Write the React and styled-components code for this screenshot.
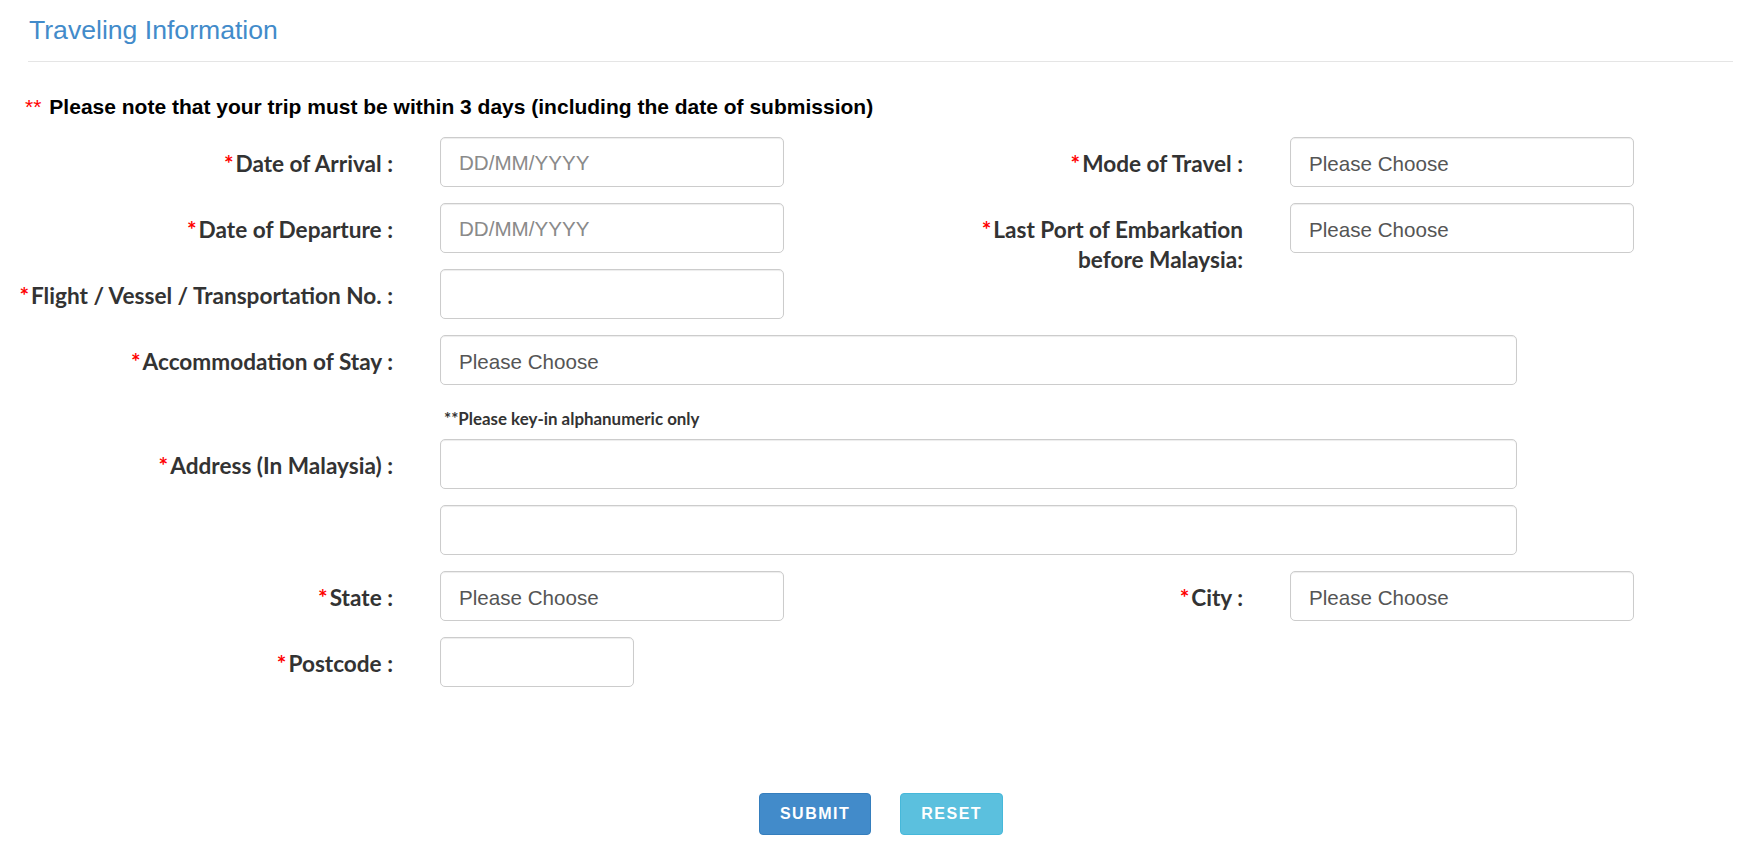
import React from "react";
import styled, { createGlobalStyle } from "styled-components";

const GlobalStyle = createGlobalStyle`
  * {
    box-sizing: border-box;
  }
  body {
    margin: 0;
    background: #ffffff;
    font-family: "Liberation Sans", Arial, sans-serif;
  }
`;

const Page = styled.div`
  padding-top: 16px;
  min-height: 850px;
`;

const Heading = styled.h3`
  margin: 0 5px 0 28px;
  padding: 0 0 16px 1px;
  font-size: 26.6px;
  font-weight: 400;
  line-height: 1.1;
  color: #428bca;
  border-bottom: 1px solid #e5e5e5;
`;

const Note = styled.p`
  margin: 33px 0 0 25px;
  font-size: 21px;
  line-height: 24px;
  font-weight: 700;
  color: #000000;
`;

const NoteStars = styled.span`
  color: #ff0000;
  font-weight: 400;
  margin-right: 8px;
`;

const Form = styled.form`
  margin-top: 18px;
  display: flex;
  flex-direction: column;
  gap: 16px;
`;

const Pair = styled.div`
  display: flex;
  align-items: flex-start;
`;

const Half = styled.div`
  width: 850px;
  flex: none;
  display: flex;
  flex-direction: column;
  gap: 16px;
`;

const Field = styled.div`
  display: flex;
  align-items: flex-start;
`;

const Label = styled.label`
  width: 393px;
  flex: none;
  padding-top: 12px;
  text-align: right;
  font-family: Lato, "Noto Sans", sans-serif;
  font-weight: 700;
  font-size: 22.6px;
  line-height: 30px;
  color: #333333;
`;

const Star = styled.span`
  color: #ff0000;
  margin-right: 2px;
`;

const controlBase = `
  margin-left: 47px;
  height: 50px;
  flex: none;
  border: 1px solid #cccccc;
  border-radius: 5px;
  background: #ffffff;
  box-shadow: inset 0 1px 1px rgba(0, 0, 0, 0.075);
  font-family: "Liberation Sans", Arial, sans-serif;
  font-size: 20.6px;
  outline: none;
`;

const TextInput = styled.input`
  ${controlBase}
  width: ${(p) => p.$w}px;
  padding: 2px 18px 0;
  color: #555555;

  &::placeholder {
    color: #8a8a8a;
  }
`;

const Select = styled.select`
  ${controlBase}
  width: ${(p) => p.$w}px;
  padding: 2px 18px 0;
  color: #555555;
  appearance: none;
  -webkit-appearance: none;
`;

const AddressGroup = styled.div`
  display: flex;
  flex-direction: column;
  gap: 16px;
`;

const Hint = styled.div`
  margin: 8px 0 -6px 444px;
  font-family: Lato, "Noto Sans", sans-serif;
  font-weight: 700;
  font-size: 16.9px;
  line-height: 20px;
  color: #333333;
`;

const Actions = styled.div`
  margin-top: 106px;
  padding-left: 24px;
  display: flex;
  justify-content: center;
  gap: 29px;
`;

const Button = styled.button`
  height: 42px;
  padding: 0 20px;
  border: 1px solid ${(p) => (p.$variant === "info" ? "#46b8da" : "#357ebd")};
  border-radius: 4px;
  background: ${(p) => (p.$variant === "info" ? "#5bc0de" : "#428bca")};
  color: #ffffff;
  font-family: "Liberation Sans", Arial, sans-serif;
  font-size: 16px;
  font-weight: 700;
  letter-spacing: 1.5px;
  cursor: pointer;
`;

const Req = ({ children, htmlFor }) => (
  <Label htmlFor={htmlFor}>
    <Star>*</Star>
    {children}
  </Label>
);

const Choose = ({ id, w }) => (
  <Select id={id} $w={w} defaultValue="">
    <option value="">Please Choose</option>
  </Select>
);

export default function App() {
  return (
    <>
      <GlobalStyle />
      <Page>
        <Heading>Traveling Information</Heading>
        <Note>
          <NoteStars>**</NoteStars>
          Please note that your trip must be within 3 days (including the date of submission)
        </Note>

        <Form onSubmit={(e) => e.preventDefault()}>
          <Pair>
            <Half>
              <Field>
                <Req htmlFor="arrival">Date of Arrival :</Req>
                <TextInput id="arrival" $w={344} placeholder="DD/MM/YYYY" />
              </Field>
              <Field>
                <Req htmlFor="departure">Date of Departure :</Req>
                <TextInput id="departure" $w={344} placeholder="DD/MM/YYYY" />
              </Field>
              <Field>
                <Req htmlFor="flight">Flight / Vessel / Transportation No. :</Req>
                <TextInput id="flight" $w={344} />
              </Field>
            </Half>
            <Half>
              <Field>
                <Req htmlFor="mode">Mode of Travel :</Req>
                <Choose id="mode" w={344} />
              </Field>
              <Field>
                <Req htmlFor="port">
                  Last Port of Embarkation
                  <br />
                  before Malaysia:
                </Req>
                <Choose id="port" w={344} />
              </Field>
            </Half>
          </Pair>

          <Field>
            <Req htmlFor="stay">Accommodation of Stay :</Req>
            <Choose id="stay" w={1077} />
          </Field>

          <AddressGroup>
            <Hint>**Please key-in alphanumeric only</Hint>
            <Field>
              <Req htmlFor="address1">Address (In Malaysia) :</Req>
              <TextInput id="address1" $w={1077} />
            </Field>
            <Field>
              <Label as="span" />
              <TextInput $w={1077} />
            </Field>
          </AddressGroup>

          <Pair>
            <Half>
              <Field>
                <Req htmlFor="state">State :</Req>
                <Choose id="state" w={344} />
              </Field>
            </Half>
            <Half>
              <Field>
                <Req htmlFor="city">City :</Req>
                <Choose id="city" w={344} />
              </Field>
            </Half>
          </Pair>

          <Field>
            <Req htmlFor="postcode">Postcode :</Req>
            <TextInput id="postcode" $w={194} />
          </Field>
        </Form>

        <Actions>
          <Button type="button">SUBMIT</Button>
          <Button type="button" $variant="info">RESET</Button>
        </Actions>
      </Page>
    </>
  );
}
